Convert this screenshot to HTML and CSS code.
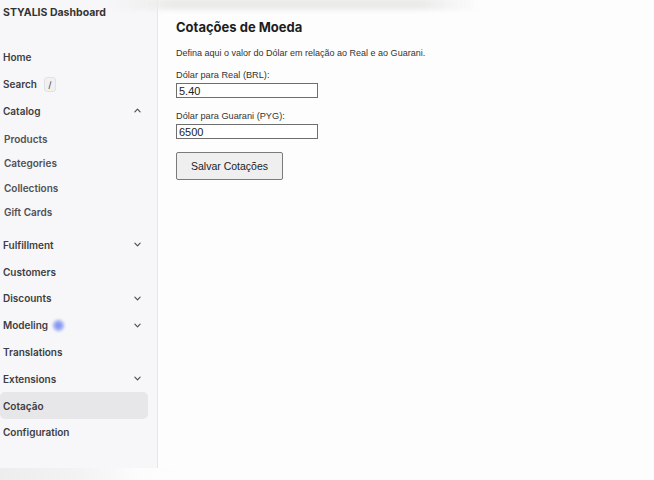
FILE: index.html
```html
<!DOCTYPE html>
<html lang="pt">
<head>
<meta charset="utf-8">
<title>Cotações de Moeda</title>
<link rel="stylesheet" href="styles.css">
</head>
<body>
<div class="screen">
  <div class="top-haze"></div>
  <div class="app">
    <aside class="sidebar">
      <div class="brand">STYALIS Dashboard</div>
      <nav class="nav">
        <a class="item">Home</a>
        <a class="item"><span class="label">Search <kbd class="kbd">/</kbd></span></a>
        <a class="item">Catalog
          <svg class="chev" viewBox="0 0 8 5"><path d="M1 4 L4 1 L7 4"/></svg>
        </a>
        <div class="sub">
          <a class="subitem">Products</a>
          <a class="subitem">Categories</a>
          <a class="subitem">Collections</a>
          <a class="subitem">Gift Cards</a>
        </div>
        <a class="item">Fulfillment
          <svg class="chev" viewBox="0 0 8 5"><path d="M1 1 L4 4 L7 1"/></svg>
        </a>
        <a class="item">Customers</a>
        <a class="item">Discounts
          <svg class="chev" viewBox="0 0 8 5"><path d="M1 1 L4 4 L7 1"/></svg>
        </a>
        <a class="item"><span class="label">Modeling <span class="pulse"></span></span>
          <svg class="chev" viewBox="0 0 8 5"><path d="M1 1 L4 4 L7 1"/></svg>
        </a>
        <a class="item">Translations</a>
        <a class="item">Extensions
          <svg class="chev" viewBox="0 0 8 5"><path d="M1 1 L4 4 L7 1"/></svg>
        </a>
        <a class="item active">Cotação</a>
        <a class="item">Configuration</a>
      </nav>
    </aside>
    <main class="main">
      <h1 class="title">Cotações de Moeda</h1>
      <p class="intro">Defina aqui o valor do Dólar em relação ao Real e ao Guarani.</p>
      <form class="rates">
        <label class="field-label" for="brl">Dólar para Real (BRL):</label>
        <input class="field" id="brl" type="text" value="5.40">
        <label class="field-label second" for="pyg">Dólar para Guarani (PYG):</label>
        <input class="field" id="pyg" type="text" value="6500">
        <button class="save" type="button">Salvar Cotações</button>
      </form>
    </main>
  </div>
  <div class="bottom-strip"></div>
</div>
</body>
</html>
```

FILE: styles.css
```css
* { box-sizing: border-box; }

html, body {
  margin: 0;
  padding: 0;
  background: #fdfdfd;
}

.screen {
  position: relative;
  width: 654px;
  height: 480px;
  overflow: hidden;
}

/* soft grey band along the top edge */
.top-haze {
  position: absolute;
  left: 0;
  top: -2px;
  width: 540px;
  height: 12px;
  background: linear-gradient(to right, rgba(234,235,233,0) 110px, #ebecea 170px, #ebecea 420px, rgba(234,235,233,0) 480px);
  filter: blur(2px);
  z-index: 2;
}

.app {
  display: flex;
  height: 468px;
}

.sidebar {
  width: 158px;
  flex: none;
  background: #f7f7f9;
  border-right: 1px solid #e6e6e9;
  padding-right: 9px;
  font-family: Inter, "Noto Sans", sans-serif;
}

.brand {
  margin-top: 7px;
  padding-left: 3px;
  font-size: 10.5px;
  font-weight: 700;
  line-height: 12px;
  color: #333;
}

.nav {
  display: flex;
  flex-direction: column;
  margin-top: 25px;
}

.item {
  height: 26.8px;
  display: flex;
  align-items: center;
  justify-content: space-between;
  padding: 0 8px 0 3px;
  border-radius: 5px;
  font-size: 10px;
  font-weight: 600;
  color: #3d3d42;
}

.item.active {
  background: #e7e7e9;
}

.label {
  display: flex;
  align-items: center;
}

.kbd {
  display: inline-flex;
  align-items: center;
  justify-content: center;
  width: 12px;
  height: 15px;
  margin-left: 7px;
  border: 1px solid #e2e2e4;
  border-radius: 3px;
  background: #f1f1f2;
  font-family: Inter, sans-serif;
  font-size: 9px;
  font-weight: 500;
  color: #555;
}

.pulse {
  display: inline-block;
  width: 13px;
  height: 13px;
  margin-left: 4px;
  border-radius: 50%;
  background: radial-gradient(circle, #7d8ef0 0, #93a2f3 35%, rgba(170,182,246,0.45) 65%, rgba(170,182,246,0) 100%);
  filter: blur(1.2px);
}

.chev {
  width: 7px;
  height: 5px;
  margin-right: -1px;
  fill: none;
  stroke: #4a4a50;
  stroke-width: 1.3;
  stroke-linecap: round;
  stroke-linejoin: round;
}

.sub {
  display: flex;
  flex-direction: column;
  margin: 2px 0 7px;
}

.subitem {
  height: 24.5px;
  display: flex;
  align-items: center;
  padding-left: 4px;
  font-size: 10px;
  font-weight: 600;
  color: #505056;
}

.main {
  flex: 1;
  padding: 19px 0 0 18px;
  font-family: "Liberation Sans", Arial, sans-serif;
  color: #222;
}

.title {
  margin: 0;
  font-family: Inter, "Noto Sans", sans-serif;
  font-size: 13px;
  font-weight: 700;
  line-height: 17px;
  color: #1d1d1f;
}

.intro {
  margin: 11px 0 0;
  font-size: 9px;
  line-height: 12px;
  color: #333;
}

.rates {
  display: flex;
  flex-direction: column;
  align-items: flex-start;
}

.field-label {
  margin-top: 10px;
  font-size: 9.2px;
  line-height: 12px;
  color: #333;
}

.field-label.second {
  margin-top: 12px;
}

.field {
  width: 142px;
  height: 15px;
  margin-top: 2px;
  padding: 0 2px;
  border: 1px solid #6e6e6e;
  border-radius: 0;
  background: #fff;
  font-family: "Liberation Sans", Arial, sans-serif;
  font-size: 11px;
  color: #222;
}

.save {
  margin-top: 13px;
  width: 107px;
  height: 28px;
  padding: 0;
  border: 1px solid #7a7a7a;
  border-radius: 2px;
  background: #efefef;
  font-family: "Liberation Sans", Arial, sans-serif;
  font-size: 10.5px;
  color: #222;
}

/* strip under the window frame */
.bottom-strip {
  height: 12px;
  background: linear-gradient(to right, #ededee 0, #f3f3f4 80px, #fcfcfc 140px, #fdfdfd 200px);
}
```
